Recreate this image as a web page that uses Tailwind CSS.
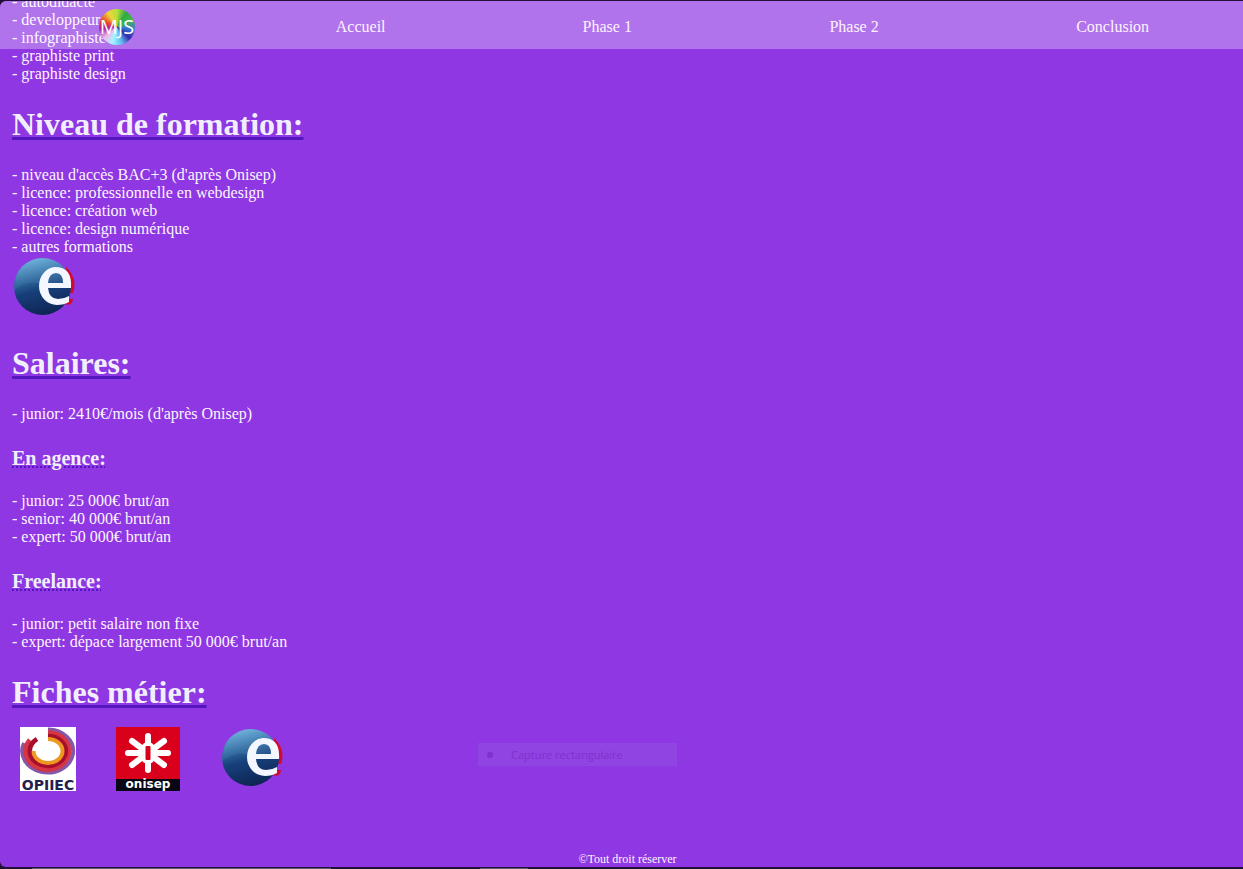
<!DOCTYPE html>
<html lang="fr">
<head>
<meta charset="utf-8">
<meta name="viewport" content="width=device-width, initial-scale=1">
<title>Webdesigner</title>
<script src="https://cdn.jsdelivr.net/npm/@tailwindcss/browser@4"></script>
</head>
<body class="h-screen overflow-hidden bg-[#241139] font-['Liberation_Serif',serif] text-base leading-[18px] text-[#fcf5ff]">
<svg class="absolute size-0" aria-hidden="true">
  <defs>
    <linearGradient id="ball" x1="0.35" y1="0" x2="0.6" y2="1">
      <stop offset="0" stop-color="#6fb4df"/><stop offset=".35" stop-color="#2f679b"/><stop offset=".55" stop-color="#173f7b"/><stop offset="1" stop-color="#0d2451"/>
    </linearGradient>
    <symbol id="emploi" viewBox="0 0 64 64">
      <path d="M54 11Q66 22 61 37H54ZM54 43H61Q60 51 52 48Z" fill="#d40a2c"/>
      <circle cx="30.500" cy="30.500" r="28.500" fill="url(#ball)"/>
      <path d="M2 34Q17 22 31 29T57 20Q50 2 31 2Q5 3 2 34Z" fill="#79b8dc" opacity=".12"/>
      <path fill-rule="evenodd" fill="#f4f7ff" d="M59 32H36Q37 43 46 43Q52 43 57 40V46Q52 49 45 49A18 19 0 0 1 27 30A17 19 0 0 1 43 11C55 11 60 18 59 32ZM36 27H51Q51 17 44 17Q37 17 36 27Z"/>
    </symbol>
  </defs>
</svg>
<div class="flex h-screen flex-col border-t border-b-2 border-[#21103a] bg-[#241139]">
  <header class="absolute inset-x-0 top-px z-10 h-12 rounded-tl-md bg-white/30">
    <nav class="grid h-full grid-cols-5 items-center pr-2 pt-1 pl-px text-[#fdf2ff]">
      <a href="#" aria-label="MJS" class="pl-[98px]">
        <span class="flex size-9 items-center justify-center rounded-full bg-[conic-gradient(from_0deg,#b4df3c,#31a942,#42b84b,#3478d9,#3529a8,#60bdf0,#a4f5ff,#f0b9ec,#ad24a7,#e9452d,#eed43b,#b4df3c)]">
          <span class="font-['Open_Sans',sans-serif] text-xl leading-6 text-white">MJS</span>
        </span>
      </a>
      <a href="#" class="pl-[88px]">Accueil</a>
      <a href="#" class="pl-[88px]">Phase 1</a>
      <a href="#" class="pl-[88px]">Phase 2</a>
      <a href="#" class="pl-[88px]">Conclusion</a>
    </nav>
  </header>
  <div class="flex min-h-0 flex-1 flex-col overflow-hidden rounded-l-md bg-[#8f37e2]">
    <main class="-mt-2 flex-1 pl-3">
      <ul>
        <li>- autodidacte</li>
        <li>- developpeur</li>
        <li>- infographiste</li>
        <li>- graphiste print</li>
        <li>- graphiste design</li>
      </ul>
      <h1 class="mt-[23px] mb-6 text-[32px] leading-9 font-bold text-[#f1efff] underline decoration-[#5316c0] decoration-3 underline-offset-2">Niveau de formation:</h1>
      <ul>
        <li>- niveau d'accès BAC+3 (d'après Onisep)</li>
        <li>- licence: professionnelle en webdesign</li>
        <li>- licence: création web</li>
        <li>- licence: design numérique</li>
        <li>- autres formations</li>
      </ul>
      <a href="#" aria-label="Pôle emploi" class="block w-16"><svg class="size-16" aria-hidden="true"><use href="#emploi"/></svg></a>
      <h1 class="mt-[25px] mb-6 text-[32px] leading-9 font-bold text-[#f1efff] underline decoration-[#5316c0] decoration-3 underline-offset-2">Salaires:</h1>
      <p>- junior: 2410€/mois (d'après Onisep)</p>
      <h2 class="mt-6 mb-[23px] text-xl leading-[22px] font-bold text-[#f1efff] underline decoration-[#5316c0] decoration-dotted decoration-2 underline-offset-1">En agence:</h2>
      <ul>
        <li>- junior: 25 000€ brut/an</li>
        <li>- senior: 40 000€ brut/an</li>
        <li>- expert: 50 000€ brut/an</li>
      </ul>
      <h2 class="mt-6 mb-[23px] text-xl leading-[22px] font-bold text-[#f1efff] underline decoration-[#5316c0] decoration-dotted decoration-2 underline-offset-1">Freelance:</h2>
      <ul>
        <li>- junior: petit salaire non fixe</li>
        <li>- expert: dépace largement 50 000€ brut/an</li>
      </ul>
      <h1 class="mt-[23px] mb-[17px] text-[32px] leading-9 font-bold text-[#f1efff] underline decoration-[#5316c0] decoration-3 underline-offset-2">Fiches métier:</h1>
      <div class="flex gap-10 pl-2">
        <a href="#" aria-label="Fiche OPIIEC">
          <svg class="h-16 w-14" viewBox="0 0 56 64" aria-hidden="true">
            <path d="M0 0H56V64H0Z" fill="#fff"/>
            <g fill="none">
              <path d="M28 2.500A25.500 21.500 0 1 1 4 16" stroke="#8557a8" stroke-width="4"/>
              <path d="M28 5.500A21.500 18.500 0 1 1 10 13" stroke="#d63544" stroke-width="5"/>
              <path d="M28 9A18 15 0 1 1 17 12" stroke="#a70f2d" stroke-width="4.500"/>
              <path d="M28 12A14.500 12 0 1 1 13.500 24" stroke="#ee9821" stroke-width="4"/>
            </g>
            <text x="28" y="63" text-anchor="middle" font-family="'DejaVu Sans', sans-serif" font-size="14" font-weight="700" fill="#24204c">OPIIEC</text>
          </svg>
        </a>
        <a href="#" aria-label="Fiche Onisep">
          <svg class="size-16" viewBox="0 0 64 64" aria-hidden="true">
            <path d="M0 0H64V52H0Z" fill="#d9001b"/><path d="M0 52H64V64H0Z" fill="#080715"/>
            <path d="M32 9V43M12 26H52M16 14L48 38M48 14L16 38" stroke="#fff" stroke-width="6" stroke-linecap="round"/>
            <rect x="25" y="15" width="14" height="22" rx="7" fill="#fff"/><rect x="29.500" y="19" width="5" height="14" rx="1" fill="#d9001b"/>
            <text x="32" y="61" text-anchor="middle" font-family="'DejaVu Sans', sans-serif" font-size="12" font-weight="700" fill="#fff">onisep</text>
          </svg>
        </a>
        <a href="#" aria-label="Fiche Pôle emploi"><svg class="size-16" aria-hidden="true"><use href="#emploi"/></svg></a>
      </div>
    </main>
    <footer class="pl-3 text-center text-xs leading-4">©Tout droit réserver</footer>
  </div>
</div>
<div class="absolute top-[743px] left-[478px] flex h-[23px] w-[199px] items-center bg-[#9044e2] pl-2 font-['Open_Sans',sans-serif] text-[11px] text-[#8130cf]">
  <span class="mr-[18px] ml-px size-1.5 rounded-full bg-[#8130cf]"></span>Capture rectangulaire
</div>
<div class="absolute bottom-0 left-8 h-px w-[299px] bg-[#655573]"></div>
<div class="absolute bottom-0 left-[480px] h-px w-12 bg-[#655573]"></div>
</body>
</html>
